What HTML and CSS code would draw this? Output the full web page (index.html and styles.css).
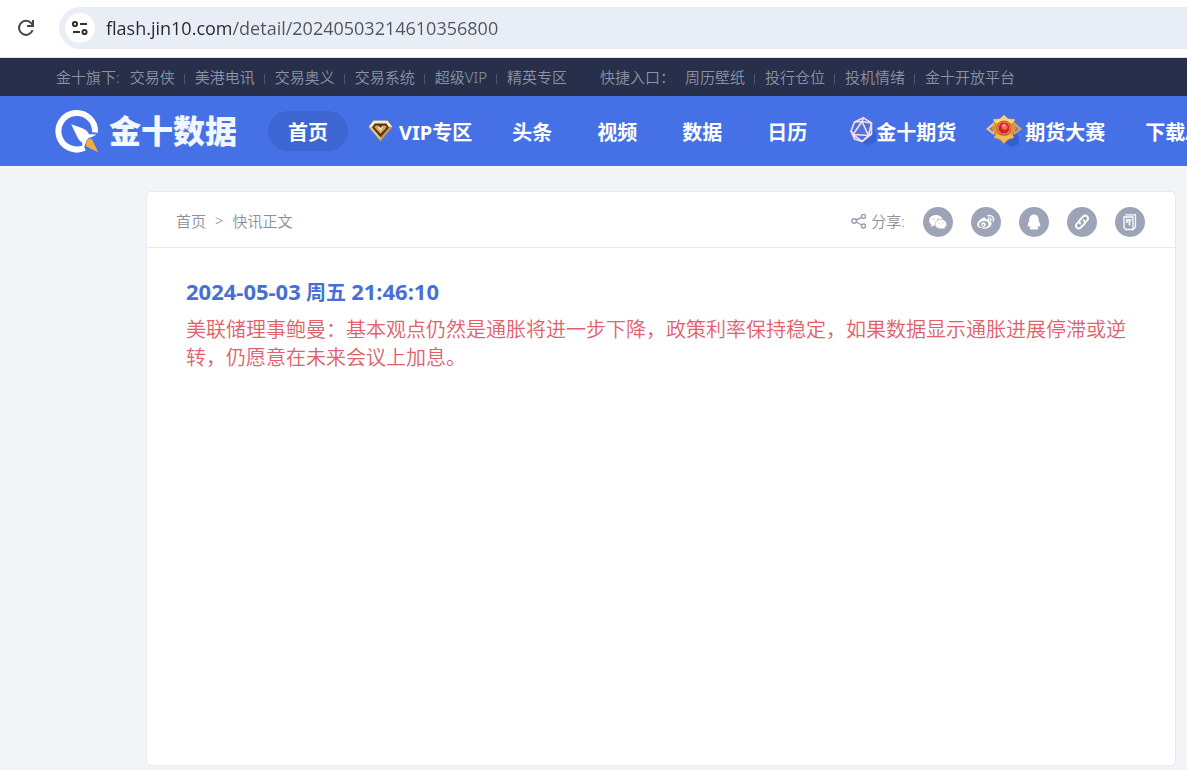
FILE: index.html
```html
<!DOCTYPE html>
<html lang="zh-CN">
<head>
<meta charset="utf-8">
<meta name="viewport" content="width=device-width, initial-scale=1">
<title>金十数据 - 快讯正文</title>
<link rel="stylesheet" href="styles.css">
</head>
<body>
<div class="browser-bar">
  <button class="reload" type="button" aria-label="Reload">
    <svg width="20" height="20" viewBox="0 0 20 20" fill="none" stroke="#474747" stroke-width="2"><path d="M16.600 12.200A7 7 0 1 1 15.400 5.400L17 7.400"/><path d="M17 2v6h-6" /></svg>
  </button>
  <div class="address">
    <button class="site-info" type="button" aria-label="Site information">
      <svg width="18" height="16" viewBox="0 0 18 16" fill="none" stroke="#333" stroke-width="2"><circle cx="4" cy="4" r="2.100"/><path d="M9 4h7M2 12h7"/><circle cx="13.500" cy="12" r="2.100"/></svg>
    </button>
    <input class="url" type="text" aria-label="Address" value="flash.jin10.com/detail/20240503214610356800">
  </div>
</div>

<nav class="topbar" aria-label="旗下产品">
  <span class="topbar-label">金十旗下:</span>
  <ul class="links">
    <li><a href="#">交易侠</a></li>
    <li><a href="#">美港电讯</a></li>
    <li><a href="#">交易奥义</a></li>
    <li><a href="#">交易系统</a></li>
    <li><a href="#">超级VIP</a></li>
    <li><a href="#">精英专区</a></li>
  </ul>
  <span class="topbar-label quick">快捷入口：</span>
  <ul class="links">
    <li><a href="#">周历壁纸</a></li>
    <li><a href="#">投行仓位</a></li>
    <li><a href="#">投机情绪</a></li>
    <li><a href="#">金十开放平台</a></li>
  </ul>
</nav>

<header class="header">
  <a class="logo" href="#">
    <svg width="44" height="44" viewBox="0 0 44 44"><path d="M29.500 38.800A18.300 18.300 0 1 1 40 23.500" fill="none" stroke="#fff" stroke-width="6"/><path d="M16.200 15.300 27.500 19.200q5 2 6.500 6l7.500.3-4.500 2.500q-5 .5-6.300 6l-2.400 6.500-1.300-7q-3.200-1.500-4.600-5.200z" fill="#fff"/><path d="m36.500 29.500 6.800 13.800L31.200 37.500q-1.200-7.500 5.300-8z" fill="#f3ac36"/></svg>
    <span class="logo-text">金十数据</span>
  </a>
  <nav class="menu" aria-label="主导航">
    <a class="item active" href="#">首页</a>
    <a class="item with-icon" href="#">
      <span class="icon vip"><svg width="25" height="22" viewBox="0 0 25 22"><path d="M5.500.8h14L24.300 7 12.500 21 .7 7z" fill="#efc77c"/><path d="M5.500.8h14L24.300 7 12.500 5 .7 7z" fill="#ffe8bd"/><path d="M24.300 7 12.500 21V16.500L19.500 7z" fill="#c8914b"/><path d="M6.800 3.500h11.400l2.800 4-8.500 9.800L4 7.500z" fill="#4a3020"/><path d="M7.500 5.500h3l2 1.700 2-1.700h3l1 2-6 6.500-6-6.500z" fill="#d9a35b"/><path d="m9.500 6.500 3 2 3-2-3 4.500z" fill="#fff0d0"/></svg></span>VIP专区</a>
    <a class="item" href="#">头条</a>
    <a class="item" href="#">视频</a>
    <a class="item" href="#">数据</a>
    <a class="item" href="#">日历</a>
    <a class="item with-icon futures" href="#">
      <span class="icon gem"><svg width="26" height="30" viewBox="0 0 26 30"><path d="m9 26 13-13 4 5v8l-7 3z" fill="#2556c4" opacity=".5"/><g fill="#5874cf" fill-opacity=".5" stroke="#f6deea" stroke-width="1.600" stroke-linejoin="round"><path d="M13.500 1.800 21.500 7v11L12 25.500 4.500 23 1 15 4.500 6z"/><path d="M12 5.500 3 18.500l15.500 1z"/><path d="M4.500 6 12 5.500 13.500 1.800M12 5.500 21.500 7l-3 12.500 3-1.500M1 15l2 3.500 1.500 4.500M3 18.500l9 7 6.500-6" fill="none"/></g></svg></span>金十期货</a>
    <a class="item with-icon" href="#">
      <span class="icon medal"><svg width="36" height="36" viewBox="0 0 36 36"><path d="m17 29 13-10 3 6v6l-8 3z" fill="#234fb8" opacity=".5"/><path d="m0 16 8-7v13z" fill="#ecc992"/><path d="m36 16-8-7v13z" fill="#d3a274"/><path d="m3 16 4-3v6zm30 0-4-3v6z" fill="#8f7791"/><path d="M18 2l4 3.500 7 .5-1 5 2 4.500-3 6.500 1 3-6 2-4 4-4-4-6-2 1-3-3-6.500L8 11 7 6l7-.5z" fill="#df9433"/><path d="m18 2 4 4 7 .5-3 4-4-1h-8l-4 1-3-4L14 6z" fill="#fbd280"/><path d="m8 24 3-3 4 2h6l4-2 3 3-6 2-4 4-4-4z" fill="#f3b954"/><circle cx="18" cy="15" r="7.500" fill="#b06028"/><circle cx="18" cy="15" r="6.500" fill="#f1a37c"/><path d="M15.500 9.500h5l3 3.500v4l-3 3.500h-5l-3-3.500v-4z" fill="#d91e22"/><path d="m15.500 12 4-1.500 2.500 3.500-2 3-4-1z" fill="#f36c5c"/><path d="m16 12 3-.5-1 2.500z" fill="#ffd8cb"/></svg></span>期货大赛</a>
    <a class="item" href="#">下载APP</a>
  </nav>
</header>

<main class="page">
  <article class="card">
    <div class="card-head">
      <nav class="crumbs" aria-label="面包屑"><a href="#">首页</a><span>&gt;</span><a href="#">快讯正文</a></nav>
      <div class="share">
        <span class="share-label"><svg width="16" height="16" viewBox="0 0 16 16" fill="none" stroke="#989eae" stroke-width="1.400"><circle cx="3.200" cy="8" r="2.300"/><circle cx="12.500" cy="3.400" r="2"/><circle cx="12.500" cy="13" r="2"/><path d="m5.300 7 5.400-2.700M5.300 9l5.400 3"/></svg>分享:</span>
        <button type="button" aria-label="微信"><svg width="20" height="20" viewBox="0 0 20 20"><path d="M8 3C4 3 1.200 5.400 1.200 8.500c0 1.800 1 3.300 2.500 4.300L3 15l2.700-1.400q1.100.3 2.300.3C12 14 14.800 11.500 14.800 8.500S12 3 8 3z" fill="#fff"/><path d="M13 7.500c-3.400 0-5.900 2-5.900 4.700s2.500 4.700 5.900 4.700q1 0 1.800-.3l2.300 1.200-.6-2c1.400-.9 2.300-2.100 2.300-3.600 0-2.700-2.500-4.700-5.800-4.700z" fill="#fff" stroke="#9ea4b8" stroke-width=".6"/><g fill="#9ea4b8"><circle cx="5.800" cy="7" r=".7"/><circle cx="10" cy="7" r=".7"/><circle cx="11" cy="11" r=".6"/><circle cx="15" cy="11" r=".6"/></g></svg></button>
        <button type="button" aria-label="微博"><svg width="20" height="20" viewBox="0 0 20 20"><path d="M8.200 5.500C9.500 5.300 10 6.200 9.600 7.500c2.500-1 4.500-.5 3.800 1.700 2 .6 2.700 1.800 2 3.600-1 2.500-4.200 4-7.600 4-3.800 0-6.600-1.700-6.600-4.200 0-2.800 4.100-6.600 7-7.100z" fill="#fff"/><ellipse cx="7.800" cy="12.300" rx="4.700" ry="3.300" fill="#9ea4b8" transform="rotate(-8 7.800 12.300)"/><circle cx="7.400" cy="12.600" r="2.300" fill="#fff"/><circle cx="7" cy="13" r=".9" fill="#9ea4b8"/><path d="M12 3.700c3.800-1 6.400 2 5.300 5.500M12.500 6.200c1.800-.4 2.900.8 2.400 2.400" fill="none" stroke="#fff" stroke-width="1.400" stroke-linecap="round"/></svg></button>
        <button type="button" aria-label="QQ"><svg width="20" height="20" viewBox="0 0 20 20"><path d="M10 2.500c3 0 4.700 2 4.700 5v1.800c1 1.400 1.700 3 1.600 4.600-.1 1-.8.8-1.500-.3-.2.9-.6 1.500-1.200 2.100 1.400.7.900 1.800-.9 1.800H7.300c-1.800 0-2.300-1.100-.9-1.800-.6-.6-1-1.200-1.200-2.100-.7 1.100-1.400 1.300-1.500.3-.1-1.600.6-3.200 1.600-4.600V7.500c0-3 1.700-5 4.700-5z" fill="#fff"/></svg></button>
        <button type="button" aria-label="复制链接"><svg width="20" height="20" viewBox="0 0 20 20" fill="none" stroke="#fff" stroke-width="1.800" stroke-linecap="round"><path d="M8.300 11.700C6.800 10.200 7 8.700 8.200 7.500l3-3c2.800-2.600 6.500 1 4 3.900l-2.100 2.100"/><path d="M11.700 8.300c1.500 1.500 1.300 3 .1 4.200l-3 3c-2.800 2.600-6.500-1-4-3.900l2.100-2.100"/></svg></button>
        <button type="button" aria-label="生成长图"><svg width="20" height="20" viewBox="0 0 20 20" fill="none" stroke="#fff"><path d="M6 3.500V2.800h9.500v12.500L13 17.500" stroke-width="1.200"/><path d="M4 5h9v12.500H6L4 15.500z" stroke-width="1.300"/><path d="M6 8h5.500M9.500 8v5.500M6.800 8v3" stroke-width="1.700"/></svg></button>
      </div>
    </div>
    <div class="flash">
      <time datetime="2024-05-03T21:46:10"><span class="digits">2024-05-03</span> 周五 <span class="digits">21:46:10</span></time>
      <p>美联储理事鲍曼：基本观点仍然是通胀将进一步下降，政策利率保持稳定，如果数据显示通胀进展停滞或逆转，仍愿意在未来会议上加息。</p>
    </div>
  </article>
</main>
</body>
</html>
```
FILE: styles.css
```css
* {
  box-sizing: border-box;
}

body {
  margin: 0;
  min-height: 100vh;
  display: flex;
  flex-direction: column;
  overflow-x: hidden;
  background: #f2f4f8;
  font-family: "Noto Sans", "Noto Sans CJK SC", sans-serif;
  font-size: 15px;
}

a {
  color: inherit;
  text-decoration: none;
}

button {
  border: 0;
  padding: 0;
  display: grid;
  place-items: center;
  background: none;
}

svg {
  display: block;
  flex: none;
}

.browser-bar {
  display: flex;
  align-items: center;
  gap: 23px;
  height: 58px;
  padding: 0 0 2px 16px;
  background: #fff;
  border-bottom: 1px solid #dfe2ea;
}

.address {
  flex: 1;
  display: flex;
  align-items: center;
  gap: 11px;
  height: 42px;
  padding-left: 6px;
  background: #e9edf6;
  border-radius: 21px 0 0 21px;
}

.site-info {
  width: 30px;
  height: 30px;
  border-radius: 50%;
  background: #fff;
}

.url {
  flex: 1;
  min-width: 0;
  border: 0;
  padding: 0;
  font: 18px/28px "Open Sans", sans-serif;
  color: transparent;
  background: linear-gradient(90deg, #25272b 126px, #505359 126px);
  background-clip: text;
  -webkit-background-clip: text;
}

.topbar {
  display: flex;
  align-items: center;
  gap: 10px;
  height: 38px;
  padding: 0 0 2px 56px;
  background: #272f4a;
  color: #8d93a6;
  font-weight: 350;
  white-space: nowrap;
  overflow: hidden;
}

.links {
  display: flex;
  margin: 0;
  padding: 0;
  list-style: none;
}

.links li {
  display: flex;
  align-items: center;
}

.links li + li::before {
  content: "";
  width: 1px;
  height: 10px;
  margin: 6px 10px 0 9px;
  background: #4d556d;
}

.quick {
  margin-left: 23px;
}

.header {
  display: flex;
  align-items: center;
  gap: 31px;
  height: 70px;
  padding-left: 55px;
  background: #4570e6;
  color: #fff;
  overflow: hidden;
}

.logo {
  display: flex;
  align-items: center;
  gap: 10px;
  flex: none;
}

.logo-text {
  font-size: 32px;
  line-height: 44px;
  font-weight: 900;
  color: #f2f7ff;
}

.menu {
  display: flex;
  gap: 5px;
  flex: none;
}

.item {
  display: flex;
  align-items: center;
  height: 40px;
  padding: 0 20px;
  border-radius: 20px;
  font-size: 20px;
  font-weight: 700;
  white-space: nowrap;
}

.active {
  background: #3d66d3;
}

.with-icon {
  padding: 0 15px;
}

.futures {
  padding-right: 10px;
}

.icon {
  display: flex;
}

.vip {
  width: 31px;
}

.gem {
  width: 29px;
  padding-left: 3px;
}

.medal {
  width: 39px;
}

.page {
  flex: 1;
  display: flex;
  padding: 25px 11px 4px 146px;
}

.card {
  flex: 1;
  background: #fff;
  border: 1px solid #e6e9f0;
  border-radius: 5px;
}

.card-head {
  display: flex;
  justify-content: space-between;
  align-items: center;
  height: 56px;
  padding: 4px 30px 0 29px;
  border-bottom: 1px solid #e9ebf1;
  color: #8b909d;
  font-weight: 350;
}

.crumbs {
  display: flex;
  gap: 9px;
  padding-bottom: 2px;
}

.share {
  display: flex;
  align-items: center;
  gap: 18px;
}

.share-label {
  display: flex;
  align-items: center;
  gap: 4px;
  padding-bottom: 2px;
}

.share button {
  width: 30px;
  height: 30px;
  border-radius: 50%;
  background: #9ea4b8;
}

.flash {
  padding: 29px 39px;
  font-size: 20px;
  line-height: 28px;
}

.flash time {
  display: block;
  color: #4870d4;
  font-weight: 700;
}

.digits {
  font-size: 22px;
}

.flash p {
  margin: 9px 0 0;
  color: #e0606c;
  font-weight: 350;
}
```
